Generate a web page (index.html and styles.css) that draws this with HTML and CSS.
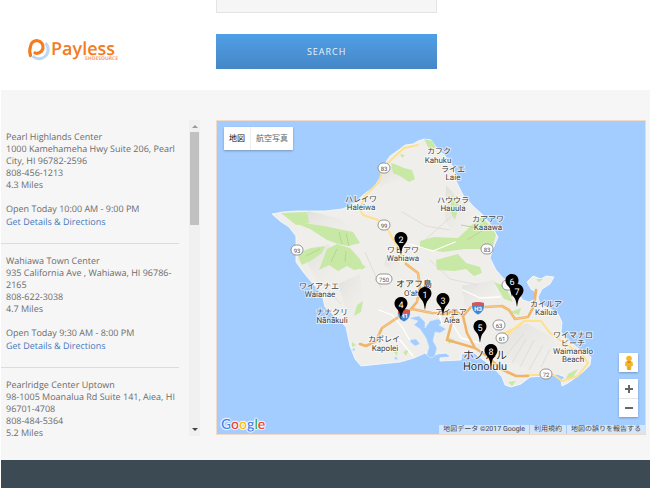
FILE: index.html
```html
<!DOCTYPE html>
<html lang="en">
<head>
<meta charset="utf-8">
<title>Payless store locator</title>
<link rel="stylesheet" href="styles.css">
</head>
<body>
<header class="top">
  <a class="logo" href="#" aria-label="Payless ShoeSource">
    <svg viewBox="0 0 100 30" width="100" height="30">
      <path d="M17.500 5 A8.500 8.500 0 1 1 4.500 18" fill="none" stroke="#bcd8f2" stroke-width="3"/>
      <path d="M2.500 17.500 C1.500 14 1.500 11 2.500 8.500 A6.300 6.300 0 1 1 7 15" fill="none" stroke="#f47b20" stroke-width="3.200" stroke-linecap="round"/>
      <text class="logo-name" x="23" y="17">Payless</text>
      <text class="logo-sub" x="90" y="22">SHOESOURCE</text>
    </svg>
  </a>
  <form class="search">
    <input class="field" type="text" aria-label="Location">
    <button class="go" type="button">SEARCH</button>
  </form>
</header>
<main class="results">
  <div class="panel">
    <ul class="stores">
      <li class="store"><p>Pearl Highlands Center<br>1000 Kamehameha Hwy Suite 206, Pearl City, HI 96782-2596<br>808-456-1213<br>4.3 Miles</p><p class="hours">Open Today 10:00 AM - 9:00 PM</p><a href="#">Get Details &amp; Directions</a></li>
      <li class="store"><p>Wahiawa Town Center<br>935 California Ave , Wahiawa, HI 96786-<wbr>2165<br>808-622-3038<br>4.7 Miles</p><p class="hours">Open Today 9:30 AM - 8:00 PM</p><a href="#">Get Details &amp; Directions</a></li>
      <li class="store"><p>Pearlridge Center Uptown<br>98-1005 Moanalua Rd Suite 141, Aiea, HI 96701-4708<br>808-484-5364<br>5.2 Miles</p></li>
    </ul>
    <div class="bar" aria-hidden="true"><i class="up"></i><i class="thumb"></i><i class="down"></i></div>
  </div>
  <div class="map" lang="ja">
    <svg class="island" viewBox="217 121 428 313" preserveAspectRatio="xMidYMid slice">
      <defs>
        <clipPath id="land"><path id="coast" d="M272 214 L283 212 297 211 325 211 342 209 350 206 357 201 363 195 374 187 380 178 384 165 390 156 400 149 405 145 413 144 418 141 424 139 431 140 436 147 446 157 454 168 456 181 463 195 474 207 483 215 492 227 498 237 494 246 490 258 496 270 503 278 511 283 517 292 523 300 529 302 534 300 537 293 531 289 527 282 533 276 541 279 546 276 554 277 550 284 542 289 538 297 540 304 549 308 558 314 562 322 561 332 568 340 579 349 591 357 590 365 583 372 575 378 568 383 562 386 561 381 565 377 557 374 545 376 530 377 521 384 511 387 505 385 502 377 493 367 482 359 473 352 462 354 461 360 440 361 440 358 451 357 446 353 437 354 431 358 425 353 414 358 400 362 380 364 361 366 355 359 350 346 346 327 338 319 325 307 322 294 314 285 304 273 296 262 296 236 289 227 280 221Z"/></clipPath>
        <linearGradient id="relief" x1="0" y1="0" x2="1" y2="1"><stop offset="0" stop-color="#dddbd7" stop-opacity=".8"/><stop offset="1" stop-color="#f2f0ec" stop-opacity="0"/></linearGradient>
        <path id="pin" d="M0 0 C-1-5-1-8-4-11 C-9-16-6-23 0-23 C6-23 9-16 4-11 C1-8 1-5 0 0Z"/>
        <g id="h1"><path d="M-6-5 Q0-7 6-5 Q8 3 0 7 Q-8 3-6-5Z" fill="#4285d0" stroke="#fff" stroke-width=".6"/><path d="M-6-5 Q0-7 6-5 V-2 H-6Z" fill="#d95550"/></g>
      </defs>
      <rect x="217" y="121" width="428" height="313" fill="#a3ccff"/>
      <use href="#coast" fill="#f0eeea" stroke="#f7fbff" stroke-width=".8"/>
      <g clip-path="url(#land)">
        <g fill="url(#relief)">
          <path d="M384 165 L414 172 413 183 394 181 378 188Z"/>
          <path d="M308 211 L341 219 357 234 330 238 302 225Z"/>
          <path d="M304 258 L328 244 344 261 334 286 317 280Z"/>
          <path d="M338 284 L360 274 364 310 350 321Z"/>
          <path d="M446 185 L470 212 460 242 445 221Z"/>
          <path d="M387 254 L401 261 397 276 384 265Z"/>
          <path d="M462 286 L494 280 498 300 465 308Z"/>
          <path d="M501 338 L526 323 554 338 561 365 530 371 499 354Z"/>
        </g>
        <g fill="none" stroke="#dfddd9" stroke-width="1"><path d="M505 357 L524 333M512 363 L526 339M520 367 L534 340M529 370 L543 345M541 367 L550 349M402 212 L426 226 450 230M430 260 L450 279 478 285M324 286 L341 304M365 252 L381 288M425 240 L464 205 463 177"/></g>
        <g fill="#c8e8a5">
          <path d="M281 213 L307 212 309 223 296 225Z"/>
          <path d="M310 224 L324 226 353 232 360 243 348 246 338 244 327 240 310 229 292 222Z"/>
          <path d="M298 253 L311 248 325 246 322 253 312 260 302 265 299 259Z"/>
          <path d="M319 270 L327 249 337 244 350 248 360 259 364 268 354 270 347 266 338 271 329 265Z"/>
          <path d="M391 163 L397 165 404 168 412 170 415 179 409 182 400 176 393 173Z"/>
          <path d="M424 139 L433 141 436 148 429 149ZM400 154 L405 155 402 158Z"/>
          <path d="M452 195 L459 205 455 220 450 211Z"/>
          <path d="M420 241 L434 237 458 238 475 222 482 217 491 227 496 235 493 246 482 249 465 249 443 252 420 248Z"/>
          <path d="M436 260 L458 254 466 263 480 267 482 273 474 276 466 269 455 271 437 270Z"/>
          <path d="M357 305 L363 301 361 312 354 316ZM494 282 L505 286 513 302 504 299ZM568 374 L578 369 573 377 565 381ZM508 382 L516 381 512 386ZM403 352 L409 349 406 356ZM371 346 L379 347 374 350ZM536 279 L543 279 539 282ZM510 312 L521 308 519 315ZM394 352 L398 349 397 356Z"/>
          <path d="M360 263 L366 267 361 270ZM352 342 L356 345 352 347ZM447 337 L455 340 449 344Z"/>
        </g>
        <path d="M339 232 L342 244M346 233 L349 246M306 256 L320 249M331 262 L337 249M345 262 L346 251M461 225 L478 228M467 240 L485 229" fill="none" stroke="#b4d78f"/>
        <g fill="#a3ccff" stroke="#dcecff" stroke-width=".6">
          <path d="M426 357 L429 347 426 338 420 329 414 325 418 321 409 318 419 316 425 322 425 328 430 321 438 319 443 322 439 325 446 329 440 333 435 332 433 341 437 348 434 359Z"/>
          <path d="M408 340 L416 339 420 344 415 346ZM351 350 L355 348 355 351ZM394 359 L396 356 398 360Z"/>
        </g>
      </g>
      <g fill="none" stroke-linejoin="round" stroke-linecap="round">
        <path d="M379 310 L392 315 403 328 410 341M442 324 L438 310M481 350 L495 361M463 290 L480 298 500 297M410 244 L433 251 455 242M450 320 L461 338 480 343M382 338 L400 340 413 356" stroke="#fff" stroke-width="1.300"/>
        <path d="M418 145 L404 148 391 160 383 168 379 182 365 196 360 210 363 215 378 220 387 228 393 239 400 251 406 264M503 341 L511 331 524 321 541 321 550 333 563 342 583 356 588 363 578 376 562 381 554 375 526 375M500 335 L518 327 524 321" stroke="#ffe08f" stroke-width="2"/>
        <path d="M406 264 L418 273 420 287 417 302 410 310M360 344 L366 346 376 341 382 328 397 318 412 309 432 313 447 314 454 310 463 316 471 307 485 307 502 306 509 310 515 319 528 317 534 306 536 290M454 310 L451 325 447 340 458 343 475 348 487 356 501 369 516 376 528 376M463 316 L467 333 475 348" stroke="#efb469" stroke-width="2.600"/>
        <path d="M406 264 L418 273 420 287 417 302M382 328 L397 318 412 309 432 313 447 314M471 307 L485 307 502 306 509 310 515 319 528 317" stroke="#f8c985" stroke-width="1"/>
      </g>
      <g fill="#fff" stroke="#8a8a8a" stroke-width=".9">
        <rect x="378" y="163" width="12" height="10" rx="5"/><rect x="378" y="220" width="12" height="10" rx="5"/><rect x="291" y="245" width="12" height="10" rx="5"/><rect x="376" y="274" width="16" height="10" rx="5"/><rect x="481" y="244" width="12" height="10" rx="5"/><rect x="493" y="320" width="12" height="10" rx="5"/><rect x="496" y="333" width="12" height="10" rx="5"/><rect x="540" y="369" width="12" height="10" rx="5"/><rect x="502" y="280" width="12" height="10" rx="5"/>
      </g>
      <g class="route"><text x="384" y="171">83</text><text x="384" y="228">99</text><text x="297" y="253">93</text><text x="384" y="282">750</text><text x="487" y="252">83</text><text x="499" y="328">63</text><text x="502" y="341">61</text><text x="546" y="377">72</text></g>
      <use href="#h1" x="478" y="308"/><use href="#h1" x="404" y="315"/>
      <g class="route shield"><text x="478" y="311">H3</text><text x="404" y="318">H1</text></g>
      <g class="place">
        <text x="439" y="154">カフク</text><text x="438" y="163">Kahuku</text>
        <text x="453" y="172">ライエ</text><text x="453" y="180">Laie</text>
        <text x="361" y="202">ハレイワ</text><text x="361" y="210">Haleiwa</text>
        <text x="453" y="203">ハウウラ</text><text x="453" y="211">Hauula</text>
        <text x="488" y="222">カアアワ</text><text x="488" y="230">Kaaawa</text>
        <text x="403" y="253">ワヒアワ</text><text x="403" y="261">Wahiawa</text>
        <text x="319" y="289">ワイアナエ</text><text x="320" y="297">Waianae</text>
        <text x="332" y="315">ナナクリ</text><text x="332" y="323">Nānākuli</text>
        <text x="384" y="342">カポレイ</text><text x="385" y="351">Kapolei</text>
        <text x="451" y="315">アイエア</text><text x="452" y="323">Aiea</text>
        <text x="546" y="307">カイルア</text><text x="546" y="315">Kailua</text>
        <text x="573" y="338">ワイマナロ</text><text x="573" y="346">ビーチ</text><text x="573" y="354">Waimanalo</text><text x="573" y="362">Beach</text>
        <text class="mid" x="414" y="287">オアフ島</text><text x="414" y="296">O'ahu</text>
        <text class="big" x="485" y="359">ホノルル</text><text class="big" x="485" y="370">Honolulu</text>
      </g>
      <g><use href="#pin" x="425" y="310"/><use href="#pin" x="401" y="255"/><use href="#pin" x="443" y="316"/><use href="#pin" x="401" y="320"/><use href="#pin" x="480" y="343"/><use href="#pin" x="512" y="297"/><use href="#pin" x="517" y="307"/><use href="#pin" x="491" y="367"/></g>
      <g class="num"><text x="425" y="298">1</text><text x="401" y="243">2</text><text x="443" y="304">3</text><text x="401" y="308">4</text><text x="480" y="331">5</text><text x="512" y="285">6</text><text x="517" y="295">7</text><text x="491" y="355">8</text></g>
    </svg>
    <div class="types"><button type="button" class="on">地図</button><button type="button">航空写真</button></div>
    <div class="controls">
      <button type="button" class="man" aria-label="Street View"><svg viewBox="0 0 12 16" width="12" height="16"><circle cx="6" cy="3.500" r="2.800" fill="#f5b52c"/><path d="M2.500 6.500 H9.500 L10 11 H8.500 L8 15 H4 L3.500 11 H2Z" fill="#f5b52c"/><path d="M4 6.500 H8 L6 8ZM6 11 V15" fill="#cf8615" stroke="#cf8615" stroke-width=".6"/></svg></button>
      <div class="zoom"><button type="button" aria-label="Zoom in"><svg viewBox="0 0 8 8" width="8" height="8"><path d="M4 0 V8M0 4 H8" stroke="#666" stroke-width="2"/></svg></button><button type="button" aria-label="Zoom out"><svg viewBox="0 0 8 8" width="8" height="8"><path d="M0 4 H8" stroke="#666" stroke-width="2"/></svg></button></div>
    </div>
    <div class="google" aria-label="Google"><span class="b">G</span><span class="r">o</span><span class="y">o</span><span class="b">g</span><span class="g">l</span><span class="r">e</span></div>
    <div class="credits"><span>地図データ ©2017 Google</span><a href="#">利用規約</a><a href="#">地図の誤りを報告する</a></div>
  </div>
</main>
<footer class="foot"></footer>
</body>
</html>
```
FILE: styles.css
```css
* { box-sizing: border-box; }
html, body { height: 100%; }
body {
  margin: 0;
  padding-left: 1px;
  display: flex;
  flex-direction: column;
  background: #fff;
  color: #6c6c6c;
  font: 9px/12px "Open Sans", sans-serif;
  text-rendering: geometricPrecision;
  overflow: hidden;
}
p { margin: 0; }
button { border: 0; padding: 0; margin: 0; font: inherit; background: #fff; }

.top {
  display: grid;
  grid-template-columns: 215px 1fr;
  height: 90px;
}
.logo { padding: 38px 0 0 27px; }
.logo svg { display: block; overflow: visible; }
.logo-name { font: 600 18px "Open Sans", sans-serif; fill: #f47b20; }
.logo-sub { font: 700 5px "Open Sans", sans-serif; fill: #f8a05c; text-anchor: end; }
.search {
  display: flex;
  flex-direction: column;
  gap: 21px;
  width: 51%;
}
.field {
  height: 13px;
  border: 1px solid #e4e4e4;
  border-top: 0;
  background: #f6f6f6;
}
.go {
  height: 35px;
  color: #e9f3fc;
  font-size: 9px;
  letter-spacing: 1px;
  background: linear-gradient(#509fe6, #4587c6);
}

.results {
  display: grid;
  grid-template-columns: 199px 1fr;
  column-gap: 16px;
  align-items: start;
  padding: 30px 4px 24px 0;
  background: #f6f6f6;
}
.panel { display: flex; height: 316px; }
.stores {
  flex: 1;
  margin: 0;
  padding: 0 10px 0 0;
  list-style: none;
  overflow: hidden;
}
.store { padding: 11px 2px 14px 5px; border-bottom: 1px solid #f9d3ba; }
.store:last-child { padding-bottom: 0; border-bottom: 0; }
.hours { padding-top: 12px; }
.store a { display: block; line-height: 14px; color: #4678be; text-decoration: none; }
.bar {
  display: flex;
  flex-direction: column;
  align-items: center;
  width: 11px;
  padding: 5px 0;
  background: #f0f0f0;
}
.up, .down { border: 3px solid transparent; border-top: 0; border-bottom: 3px solid #999; }
.down { margin-top: auto; border-bottom: 0; border-top: 3px solid #444; }
.thumb { width: 9px; height: 93px; margin-top: 4px; background: #c1c1c1; }

.map {
  position: relative;
  border: 1px solid #f3d9c8;
  font-family: Roboto, "Noto Sans CJK JP", sans-serif;
  overflow: hidden;
}
.island { display: block; width: 100%; }
.island text { text-anchor: middle; }
.place text {
  font-size: 8px;
  fill: #444;
  stroke: #fff;
  stroke-width: 2px;
  stroke-opacity: .6;
  paint-order: stroke;
}
.place .mid { font-size: 9px; fill: #333; }
.place .big { font-size: 11px; fill: #333; }
.route text { font-size: 6px; fill: #555; }
.shield text { font-weight: 700; fill: #fff; }
.num text { font-size: 9px; fill: #fff; }
.types {
  position: absolute;
  top: 6px;
  left: 7px;
  display: flex;
  height: 23px;
  background: #fff;
  box-shadow: 0 1px 2px #0004;
}
.types button { padding: 0 5px; font-size: 8px; color: #666; }
.types .on { border-right: 1px solid #eee; color: #111; }
.controls {
  position: absolute;
  right: 7px;
  bottom: 17px;
  display: flex;
  flex-direction: column;
  gap: 7px;
}
.controls button { display: grid; place-items: center; width: 19px; height: 19px; }
.controls .man, .zoom { box-shadow: 0 1px 2px #0004; }
.zoom button + button { border-top: 1px solid #e6e6e6; }
.google {
  position: absolute;
  left: 4px;
  bottom: 1px;
  font: 600 14px/18px Lato, sans-serif;
  text-shadow: 0 0 1px #fff, 1px 0 1px #fff, -1px 0 1px #fff, 0 1px 1px #fff, 0 -1px 1px #fff;
}
.b { color: #4285f4; }
.r { color: #ea4335; }
.y { color: #fbbc05; }
.g { color: #34a853; }
.credits {
  position: absolute;
  right: 0;
  bottom: 0;
  display: flex;
  gap: 1px;
  font-size: 7px;
  line-height: 9px;
  color: #444;
}
.credits > * { padding: 0 4px; background: #d5e6fa; color: #444; text-decoration: none; }

.foot { flex: 1; background: #3c4a54; }
```
